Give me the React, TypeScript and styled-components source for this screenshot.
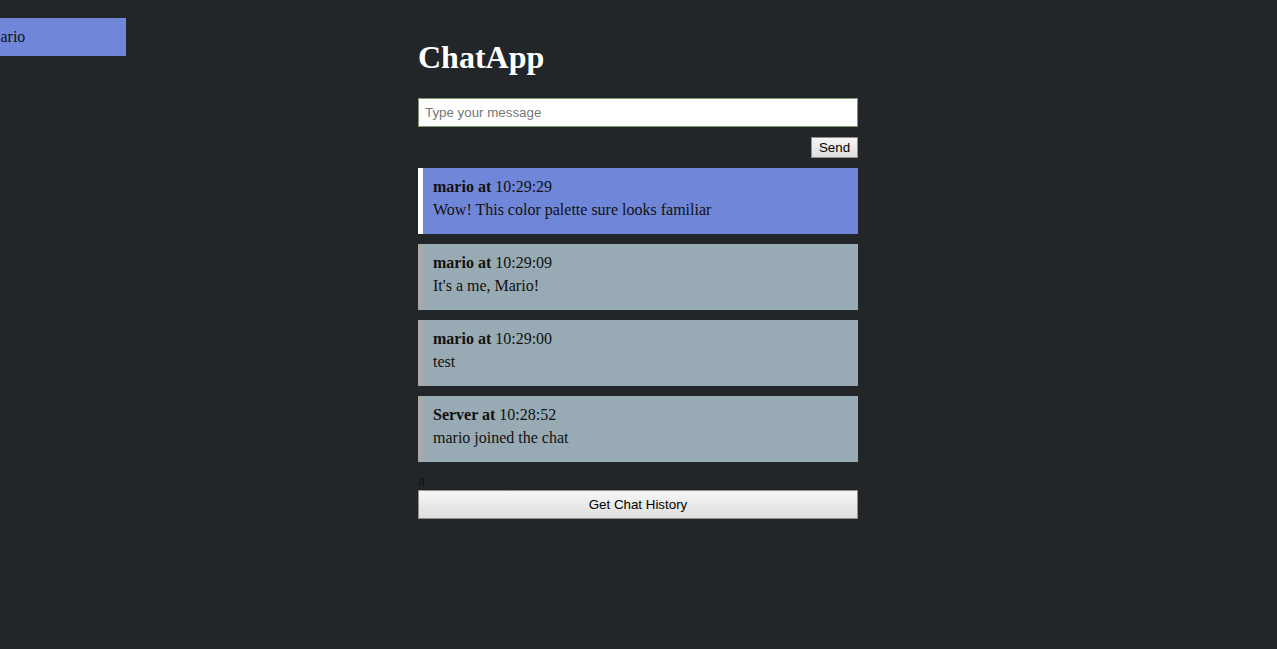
import styled, { createGlobalStyle } from 'styled-components';

const GlobalStyle = createGlobalStyle`
   html, body {
      margin: 0;
      padding: 0;
      background: #222629;
      font-family: "Liberation Serif", "Times New Roman", serif;
      font-size: 16px;
   }
`;

type Message = { from: string; time: string; text: string; mine?: boolean };

const messages: Message[] = [
   { from: 'mario', time: '10:29:29', text: 'Wow! This color palette sure looks familiar', mine: true },
   { from: 'mario', time: '10:29:09', text: "It's a me, Mario!" },
   { from: 'mario', time: '10:29:00', text: 'test' },
   { from: 'Server', time: '10:28:52', text: 'mario joined the chat' },
];

export default function App() {
   return (
      <Page>
         <GlobalStyle />
         <Sidebar>
            <UserItem><span>mario</span></UserItem>
         </Sidebar>
         <Main>
            <Title>ChatApp</Title>
            <MessageInput placeholder="Type your message" />
            <SendRow>
               <SmallButton>Send</SmallButton>
            </SendRow>
            <List>
               {messages.map((m, i) => (
                  <Bubble key={i} $mine={m.mine}>
                     <Line><b>{m.from} at</b> {m.time}</Line>
                     <Line>{m.text}</Line>
                  </Bubble>
               ))}
            </List>
            <Typing>a</Typing>
            <WideButton>Get Chat History</WideButton>
         </Main>
      </Page>
   );
}

const Page = styled.div`
   display: flex;
   justify-content: center;
   min-height: 649px;
   padding: 18px 1px 0 0;
   box-sizing: border-box;
   position: relative;
`;

const Sidebar = styled.div`
   position: absolute;
   left: 0;
   top: 18px;
   width: 126px;
   overflow: hidden;
`;

const UserItem = styled.div`
   height: 38px;
   display: flex;
   align-items: center;
   background: #7087d9;
   color: #111;
   span { margin-left: -12px; }
`;

const Main = styled.div`
   width: 440px;
   display: flex;
   flex-direction: column;
`;

const Title = styled.h1`
   margin: 21px 0 22px;
   color: #fff;
   font-size: 32px;
   font-weight: bold;
   line-height: 37px;
`;

const MessageInput = styled.input`
   height: 29px;
   box-sizing: border-box;
   border: 1px solid #80996f;
   padding: 0 6px;
   font-family: "Liberation Sans", Arial, sans-serif;
   font-size: 13.33px;
   background: #fff;
   outline: none;
   &::placeholder { color: #777; }
`;

const SendRow = styled.div`
   display: flex;
   justify-content: flex-end;
   margin: 10px 0;
`;

const SmallButton = styled.button`
   height: 21px;
   width: 47px;
   padding: 0;
   border: 1px solid #8f8f8f;
   background: linear-gradient(#f6f6f6, #dedede);
   font-family: "Liberation Sans", Arial, sans-serif;
   font-size: 13.33px;
   color: #000;
`;

const List = styled.div`
   display: flex;
   flex-direction: column;
   gap: 10px;
`;

const Bubble = styled.div<{ $mine?: boolean }>`
   height: 66px;
   box-sizing: border-box;
   padding: 10px 10px 0;
   border-left: 5px solid ${(p) => (p.$mine ? '#fff' : '#a9a9a9')};
   background: ${(p) => (p.$mine ? '#7087d9' : '#98aab3')};
   color: #111;
`;

const Line = styled.div`
   line-height: 18px;
   margin-bottom: 5px;
`;

const Typing = styled.div`
   margin-top: 10px;
   line-height: 18px;
   color: #111;
`;

const WideButton = styled.button`
   height: 29px;
   border: 1px solid #8f8f8f;
   background: linear-gradient(#f6f6f6, #dedede);
   font-family: "Liberation Sans", Arial, sans-serif;
   font-size: 13.33px;
   color: #000;
`;
